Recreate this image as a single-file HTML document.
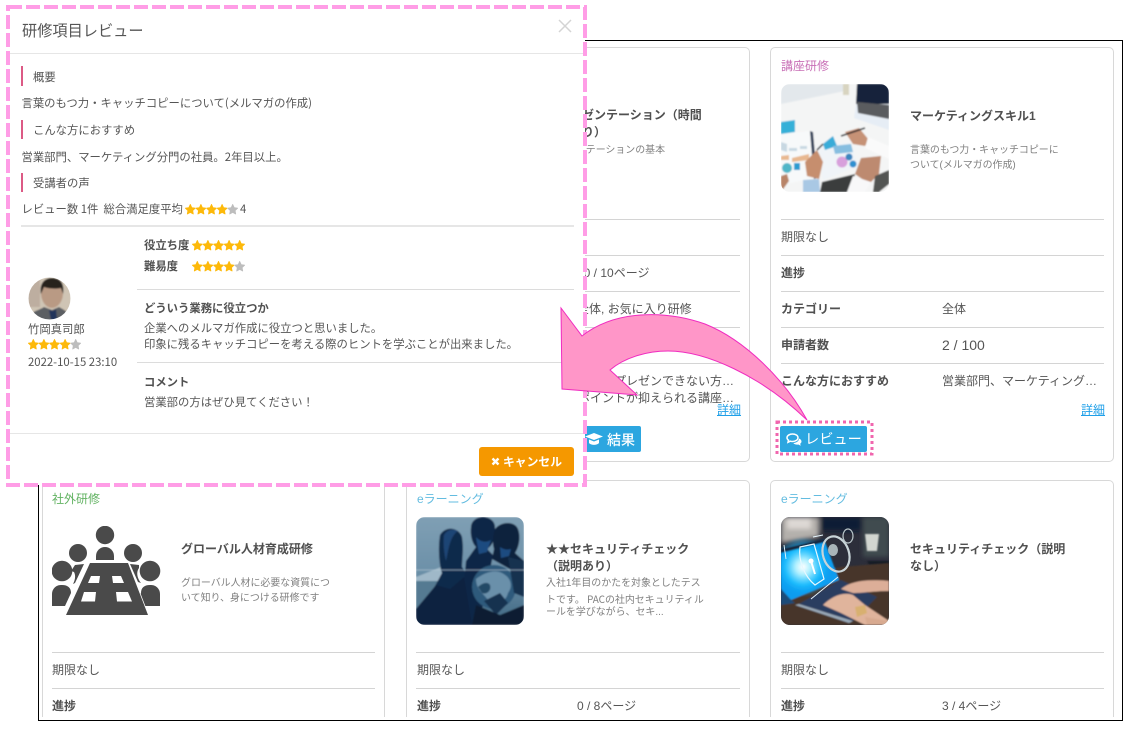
<!DOCTYPE html>
<html lang="ja"><head><meta charset="utf-8"><title>研修項目レビュー</title>
<style>
html,body{margin:0;padding:0;background:#fff;overflow:hidden;height:729px}
#p{position:relative;width:1134px;height:729px;overflow:hidden;background:#fff;font-family:"Liberation Sans","Noto Sans CJK JP",sans-serif;color:#555;font-size:12px}
.t{position:absolute;white-space:nowrap;line-height:16px;transform:translateY(-7px)}
.b{font-weight:700;color:#505050}
.m{font-size:11.35px;font-family:"Noto Sans CJK JP","Liberation Sans",sans-serif;transform:translateY(-8px)}
.d{font-size:9.95px;color:#808080;transform:translateY(-6px)}
.card{position:absolute;box-sizing:border-box;border:1.5px solid #d8d8d8;border-radius:5px;background:#fff}
.hr{position:absolute;height:1px;background:#d4d4d4}
.mh{position:absolute;height:1px;background:#e6e6e6}
.bar{position:absolute;left:21px;width:2px;background:#dc5a85}
.lnk{color:#1e9fe8;text-decoration:underline}
.btn{position:absolute;background:#2ca6e0;border-radius:2px;color:#fff;font-size:14px}
svg{position:absolute;display:block}
</style></head><body><div id="p">
<svg width="0" height="0"><defs>
<polygon id="s" points="5.3,.4 6.8,3.7 10.2,4.200 7.700,6.600 8.300,10 5.300,8.400 2.300,10 2.900,6.600 .4,4.200 3.800,3.700" stroke-width=".8" stroke-linejoin="round"/>
<g id="s4" fill="#fdb90a" stroke="#fdb90a"><use href="#s" x="0"/><use href="#s" x="10.6"/><use href="#s" x="21.2"/><use href="#s" x="31.8"/><use href="#s" x="42.4" style="fill:#bdbdbd;stroke:#bdbdbd"/></g>
<g id="s5" fill="#fdb90a" stroke="#fdb90a"><use href="#s" x="0"/><use href="#s" x="10.6"/><use href="#s" x="21.2"/><use href="#s" x="31.8"/><use href="#s" x="42.4"/></g>
<clipPath id="rc"><rect width="108" height="108" rx="9"/></clipPath>
<filter id="bl" x="-10%" y="-10%" width="120%" height="120%"><feGaussianBlur stdDeviation="0.8"/></filter>
<filter id="bl2" x="-20%" y="-20%" width="140%" height="140%"><feGaussianBlur stdDeviation="2.500"/></filter>
<radialGradient id="glow"><stop offset="0" stop-color="#fff"/><stop offset=".25" stop-color="#b0f0ff"/><stop offset=".6" stop-color="#20c0ff" stop-opacity=".9"/><stop offset="1" stop-color="#0a9cf0" stop-opacity="0"/></radialGradient>
<linearGradient id="g2" x1="0" y1="0" x2="0" y2="1"><stop offset="0" stop-color="#7f9fb4"/><stop offset=".5" stop-color="#6c90a8"/><stop offset="1" stop-color="#3f6782"/></linearGradient>
</defs></svg>

<!-- frame -->
<div style="position:absolute;left:38px;top:40px;width:1083px;height:679px;border:1.5px solid #000"></div>

<!-- row 1 cards -->
<div class="card" style="left:406px;top:47px;width:344px;height:415px"></div>
<div class="card" style="left:770px;top:47px;width:344px;height:415px"></div>

<!-- row 2 cards -->
<div style="position:absolute;left:42px;top:480px;width:1072px;height:237px;overflow:hidden">
<div class="card" style="left:0;top:0;width:343px;height:237px;border-bottom:0;border-radius:5px 5px 0 0"></div>
<div class="card" style="left:364px;top:0;width:344px;height:237px;border-bottom:0;border-radius:5px 5px 0 0"></div>
<div class="card" style="left:728px;top:0;width:344px;height:237px;border-bottom:0;border-radius:5px 5px 0 0"></div>
</div>

<!-- card 2 row 1 content -->
<div class="t b" style="left:558px;top:114px">プレゼンテーション（時間</div>
<div class="t b" style="left:546px;top:131px">制限あり）</div>
<div class="t d" style="left:546px;top:149px">プレゼンテーションの基本</div>
<div class="hr" style="left:416px;top:219px;width:324px"></div>
<div class="hr" style="left:416px;top:255px;width:324px"></div>
<div class="hr" style="left:416px;top:291px;width:324px"></div>
<div class="hr" style="left:416px;top:327px;width:324px"></div>
<div class="hr" style="left:416px;top:363px;width:324px"></div>
<div class="t" style="left:577px;top:272px">10 / 10ページ</div>
<div class="t" style="left:577px;top:308px">全体, お気に入り研修</div>
<div class="t" style="left:578px;top:380px">うまくプレゼンできない方…</div>
<div class="t" style="left:578px;top:397px">ポイントが抑えられる講座…</div>
<div class="t lnk" style="left:717px;top:409px">詳細</div>
<div class="btn" style="left:570px;top:426px;width:71px;height:26px">
<svg style="left:15px;top:7px" width="18" height="13" viewBox="0 0 18 13"><path fill="#fff" d="M9 0 18 3.500 9 7 0 3.500ZM4 6.500 9 8.500 14 6.500V10C12 12.500 6 12.500 4 10Z"/></svg>
<span class="t" style="left:37px;top:13px;font-weight:500">結果</span></div>

<!-- card 3 row 1 content -->
<div class="t" style="left:781px;top:65px;color:#c86fb6">講座研修</div>
<svg style="left:781px;top:84px" width="108" height="108" viewBox="0 0 108 108"><g clip-path="url(#rc)"><g filter="url(#bl)">
<rect width="108" height="108" fill="#f4f5f5"/>
<path d="M0 0H64V7L0 20Z" fill="#e3e8ec"/>
<path d="M62 0h6v11h-6Z" fill="#d8d4c0"/>
<path d="M78 0 73 34 108 46V0Z" fill="#e6edf5"/>
<path d="M76 0h32v20H75Z" fill="#14203a"/>
<path d="M76 18 108 21V35L77 29Z" fill="#5a5c5e"/>
<path d="M0 50 29 47 34 94 0 101Z" fill="#f7f9fa"/>
<path d="M29 47 32 48 36 94 33 95Z" fill="#2e3d56"/>
<path d="M0 38 14 36V48L0 50Z" fill="#35b0d8"/>
<path d="M0 66 6 68V60L0 58ZM8 64h8v3H8ZM19 62h7v3h-7Z" fill="#c8d8e2"/>
<path d="M0 72 8 71V76H0ZM11 74 28 70V76L11 78Z" fill="#e8b890"/>
<circle cx="6" cy="84" r="5" fill="#4fb6c8"/><rect x="13" y="79" width="6" height="7" fill="#2a9cd0"/>
<path d="M36 62 68 58 78 82 42 96Z" fill="#f0f4f8"/>
<path d="M42 60 52 52 56 62 44 66Z" fill="#38acd8"/>
<path d="M52 62 70 60 72 68 54 70Z" fill="#86bee0"/>
<circle cx="61" cy="78" r="5.500" fill="#d8a0dc"/><circle cx="68" cy="73" r="3.500" fill="#3a86c0"/><circle cx="72" cy="80" r="3.500" fill="#2e90d0"/>
<path d="M0 108V92L6 90 8 97 0 108Z" fill="#b88468"/>
<path d="M26 92 24 78 36 66 42 78 38 95Z" fill="#c68e6e"/>
<path d="M22 96 38 95 39 108H22Z" fill="#a9c8e4"/>
<path d="M39 108 41 98 74 90 70 108Z" fill="#3a3c3e"/>
<path d="M64 48 78 44 88 56 84 62 72 60Z" fill="#c69276"/>
<path d="M60 52 84 44" stroke="#22262c" stroke-width="1.500"/>
<path d="M36 66 42 60" stroke="#22262c" stroke-width="1.500"/>
<path d="M87 53 108 62V75L84 64Z" fill="#fafafa"/>
<path d="M74 90 80 74 100 72 98 90 88 100Z" fill="#bd8a70"/>
<path d="M66 108 72 92 90 98 84 108Z" fill="#f8f8f9"/>
<path d="M92 108 94 92 108 86V100L98 108Z" fill="#525452"/>
</g></g></svg>
<div class="t b" style="left:910px;top:115px">マーケティングスキル1</div>
<div class="t d" style="left:910px;top:149px">言葉のもつ力・キャッチコピーに</div>
<div class="t d" style="left:910px;top:164px">ついて(メルマガの作成)</div>
<div class="hr" style="left:781px;top:219px;width:323px"></div>
<div class="hr" style="left:781px;top:255px;width:323px"></div>
<div class="hr" style="left:781px;top:291px;width:323px"></div>
<div class="hr" style="left:781px;top:327px;width:323px"></div>
<div class="hr" style="left:781px;top:363px;width:323px"></div>
<div class="t" style="left:781px;top:236px">期限なし</div>
<div class="t b" style="left:781px;top:272px">進捗</div>
<div class="t b" style="left:781px;top:308px">カテゴリー</div>
<div class="t" style="left:942px;top:308px">全体</div>
<div class="t b" style="left:781px;top:344px">申請者数</div>
<div class="t" style="left:942px;top:344px;font-size:14px">2 / 100</div>
<div class="t b" style="left:781px;top:380px">こんな方におすすめ</div>
<div class="t" style="left:942px;top:380px">営業部門、マーケティング…</div>
<div class="t lnk" style="left:1081px;top:409px">詳細</div>
<div class="btn" style="left:780px;top:426px;width:87px;height:26px">
<svg style="left:6px;top:7px" width="16" height="13" viewBox="0 0 16 13"><path fill="none" stroke="#fff" stroke-width="1.500" d="M6.500 1C3.500 1 1 2.600 1 4.700c0 1 .6 1.800 1.500 2.500L2 9.300l2.300-1.100c.7.200 1.400.3 2.200.3 3 0 5.500-1.600 5.500-3.800S9.500 1 6.500 1Z"/><path fill="#fff" d="M13 5.500c1.300.6 2.500 1.500 2.500 3 0 1-.6 1.700-1.300 2.200l.5 2-2.400-1.200c-2 .3-4 -.2-5-1.500 3 0 5.700-1.800 5.700-4.500Z"/></svg>
<span class="t" style="left:25px;top:13px;font-size:14.200px">レビュー</span></div>
<svg style="left:775px;top:420px" width="99" height="36"><rect x="2" y="2" width="95" height="32" fill="none" stroke="#f066ae" stroke-width="3" stroke-dasharray="3 3"/></svg>

<!-- row 2 content -->
<div class="t" style="left:52px;top:498px;color:#63b363">社外研修</div>
<svg style="left:52px;top:526px" width="109" height="90" viewBox="52 526 109 90" fill="#4a4a4a">
<circle cx="105" cy="535" r="9.200"/><path d="M96 560v-4a9 9 0 0 1 18 0v4Z"/>
<circle cx="78" cy="553" r="9"/><circle cx="133" cy="553" r="9"/>
<circle cx="62" cy="571" r="10.300"/><circle cx="150" cy="571" r="10.300"/>
<path d="M52 606v-12a9 9 0 0 1 10-9c6 0 9 3 9 8l-6 13ZM160 606v-12a9 9 0 0 0-10-9c-6 0-9 3-9 8l-6 13Z" transform="translate(0 0)"/>
<path d="M75 565l9-1-9 19-2 1c2-4 3-8 1-12l-3-1ZM130 564l9 1 0 3c-3 4-2 10 2 15l-3-1Z"/>
<path d="M90 563h38l20 52H66Z" stroke="#fff" stroke-width="1.500" paint-order="stroke"/>
<path fill="#fff" d="M91 576h9l-1 7H88ZM112 576h9l3 7h-11ZM84 592h12l-1 9.500H81ZM116 592h12l4 9.500h-15Z"/>
</svg>
<div class="t b" style="left:181px;top:548px">グローバル人材育成研修</div>
<div class="t d" style="left:181px;top:582px">グローバル人材に必要な資質につ</div>
<div class="t d" style="left:181px;top:597px">いて知り、身につける研修です</div>
<div class="hr" style="left:52px;top:652px;width:323px"></div>
<div class="hr" style="left:52px;top:688px;width:323px"></div>
<div class="t" style="left:52px;top:669px">期限なし</div>
<div class="t b" style="left:52px;top:705px">進捗</div>

<div class="t" style="left:417px;top:498px;color:#63bce0">eラーニング</div>
<svg style="left:416px;top:517px" width="108" height="108" viewBox="0 0 108 108"><g clip-path="url(#rc)"><g filter="url(#bl)">
<rect width="108" height="108" fill="url(#g2)"/>
<path d="M0 60 30 48 40 56 0 74Z" fill="#9fb8c8"/>
<path d="M0 64H28L22 90 0 96Z" fill="#557a92"/>
<path d="M24 18a12 12 0 0 1 22 2c2 12 0 22 0 30l8 12-4 46H8l4-26 14-26c-3-8-4-26-2-38Z" fill="#11294c"/>
<path d="M28 18a10 10 0 0 1 14-4c-5 3-8 10-10 20l-2 10c-2-8-3-18-2-26Z" fill="#1d4474"/>
<path d="M55 10a12 10 0 0 1 24 0c0 12-2 18-8 22l6 6-14 70H44l6-64 10-14C56 26 54 18 55 10Z" fill="#0e2646"/>
<path d="M60 20c4 5 10 6 15 3l-4 12-8 2Z" fill="#1f4c80"/>
<path d="M79 12c6-8 20-8 23 0 3 8 1 18-3 24l9 8v16l-32-18 2-10C76 26 77 18 79 12Z" fill="#0b203e"/>
<path d="M84 30c4 3 8 3 11 2l-2 7-8 2Z" fill="#1f4c80"/>
<circle cx="78" cy="70" r="22" fill="#2f5a7c"/>
<path d="M60 62c8-6 18-10 26-6 8 4 12 12 6 20-2 8-10 14-18 10-4-8-14-12-14-24Z" fill="#6a90aa"/>
<path d="M68 84l16-8 8 10-12 12Z" fill="#15304f"/>
<path d="M62 70c4-4 10-6 12-2 2 6-4 10-8 8Z" fill="#234966"/>
<path d="M0 108V92L20 68 34 72 48 60 56 108Z" fill="#0b2040"/>
<path d="M56 108 60 88 84 98 108 88V108Z" fill="#091a32"/>
<path d="M92 40 108 44V80L98 76Z" fill="#14304f"/>
<path d="M0 53H108" stroke="#b9ccd8" stroke-width=".8" opacity=".8"/>
</g></g></svg>
<div class="t b" style="left:546px;top:548px">★★セキュリティチェック</div>
<div class="t b" style="left:546px;top:565px">（説明あり）</div>
<div class="t d" style="left:546px;top:582px">入社1年目のかたを対象としたテス</div>
<div class="t d" style="left:546px;top:597px;font-family:'Noto Sans CJK JP',sans-serif">トです。 PACの社内セキュリティル</div>
<div class="t d" style="left:546px;top:611px">ールを学びながら、セキ...</div>
<div class="hr" style="left:416px;top:652px;width:324px"></div>
<div class="hr" style="left:416px;top:688px;width:324px"></div>
<div class="t" style="left:417px;top:669px">期限なし</div>
<div class="t b" style="left:417px;top:705px">進捗</div>
<div class="t" style="left:577px;top:705px">0 / 8ページ</div>

<div class="t" style="left:781px;top:498px;color:#63bce0">eラーニング</div>
<svg style="left:781px;top:517px" width="108" height="108" viewBox="0 0 108 108"><g clip-path="url(#rc)">
<rect width="108" height="108" fill="#2c2e3a"/>
<g filter="url(#bl2)"><path d="M0 0H38V20L0 26Z" fill="#b4b0ac"/><path d="M6 0H30V12H6Z" fill="#ddd8d4"/>
<rect x="82" y="0" width="26" height="40" fill="#3f4c50"/>
<rect x="40" y="0" width="40" height="14" fill="#0e1c36"/></g>
<path d="M84 17H98L96 34H86Z" fill="#d2d6d0" filter="url(#bl)"/>
<path d="M86 44H108V50L88 48Z" fill="#181c28" filter="url(#bl)"/>
<g filter="url(#bl)">
<path d="M0 60 60 50 108 46V108H0Z" fill="#463629"/>
<path d="M0 32 43 22 58 63 10 83 0 72Z" fill="#0a9cf0"/>
<circle cx="22" cy="50" r="30" fill="url(#glow)"/>
<path d="M0 32 43 22 44 25 0 36Z" fill="#14263e"/>
<path d="M0 72 10 83 14 86 0 88Z" fill="#1a4c78"/>
<path d="M18 87 60 63 96 80 72 104Z" fill="#2c3c60"/>
<path d="M14 88 18 87 72 104 68 106Z" fill="#98a8b8"/>
<path d="M60 72C70 64 85 62 108 64V74C92 74 84 76 72 76Z" fill="#dcae98"/>
<path d="M42 88C50 80 62 74 72 78L84 88 108 104V108H84L60 96Z" fill="#e0b49c"/>
<path d="M74 90 84 88 86 96 76 100Z" fill="#d8b070"/>
<path d="M84 100 108 104V108H86Z" fill="#d8aa90"/>
</g>
<path d="M19 30 33 27 43 62 34 68C24 60 17 44 19 30Z" fill="none" stroke="#e6f8ff" stroke-width="1.200"/>
<circle cx="30" cy="44" r="2.500" fill="#fff"/><path d="M30 44 34 57" stroke="#fff" stroke-width="2"/>
<path d="M3 28 5 42M32 20 42 18M57 60 30 82" fill="none" stroke="#e8f8ff" stroke-width=".9"/>
<ellipse cx="55" cy="37" rx="13" ry="18" fill="none" stroke="#c8d4d8" stroke-width="2.200" transform="rotate(-18 55 37)"/>
<ellipse cx="52" cy="33" rx="5" ry="6" fill="#a8b4b8"/>
<ellipse cx="67" cy="19" rx="5" ry="7" fill="none" stroke="#b8c4c8" stroke-width="1.200"/>
</g></svg>
<div class="t b" style="left:910px;top:548px">セキュリティチェック（説明</div>
<div class="t b" style="left:910px;top:565px">なし）</div>
<div class="hr" style="left:781px;top:652px;width:323px"></div>
<div class="hr" style="left:781px;top:688px;width:323px"></div>
<div class="t" style="left:781px;top:669px">期限なし</div>
<div class="t b" style="left:781px;top:705px">進捗</div>
<div class="t" style="left:942px;top:705px">3 / 4ページ</div>

<!-- modal -->
<div style="position:absolute;left:8px;top:7px;width:577px;height:478px;background:#fff"></div>
<svg style="left:0;top:0" width="600" height="495"><rect x="8" y="7" width="577" height="478" fill="none" stroke="#ff9de6" stroke-width="4" stroke-dasharray="14 4"/></svg>
<div class="t m" style="left:22px;top:30px;font-size:15.200px">研修項目レビュー</div>
<svg style="left:558px;top:19px" width="14" height="14"><path d="M1 1 13 13M13 1 1 13" stroke="#d4d4d4" stroke-width="1.500"/></svg>
<div class="mh" style="left:10px;top:53px;width:573px"></div>
<div class="bar" style="top:66px;height:20px"></div>
<div class="t m" style="left:33px;top:77px">概要</div>
<div class="t m" style="left:21.500px;top:103px">言葉のもつ力・キャッチコピーについて(メルマガの作成)</div>
<div class="bar" style="top:120px;height:19px"></div>
<div class="t m" style="left:33px;top:130px">こんな方におすすめ</div>
<div class="t m" style="left:21.500px;top:157px">営業部門、マーケティング分門の社員。2年目以上。</div>
<div class="bar" style="top:173px;height:19px"></div>
<div class="t m" style="left:33px;top:183px">受講者の声</div>
<div class="t m" style="left:21.500px;top:209px">レビュー数 1件 &nbsp;総合満足度平均</div>
<svg style="left:185px;top:204px" width="54" height="11"><use href="#s4"/></svg>
<div class="t m" style="left:240px;top:209px">4</div>
<div class="mh" style="left:21px;top:225px;width:553px;height:2px"></div>

<svg style="left:28px;top:277px" width="43" height="43" viewBox="0 0 43 43"><defs><clipPath id="av"><circle cx="21.500" cy="21.500" r="21"/></clipPath></defs><g clip-path="url(#av)"><g filter="url(#bl)">
<rect width="43" height="43" fill="#cfc4b4"/>
<path d="M0 0h12v30H0Z" fill="#bdaea0"/>
<path d="M0 43c2-9 10-9 16-13l8 3 7-3c5 3 11 5 12 13Z" fill="#5c5e64"/>
<path d="M21 33l4 1 3-2 1 11h-6Z" fill="#24365c"/>
<path d="M13 16c0-7 4-11 11-11s11 4 11 11c0 8-5 15-11 15s-11-7-11-15Z" fill="#b99a84"/>
<path d="M13 17C11 6 17 1 24 1s13 4 11 16l-2-6c-4 1-12 1-17-1Z" fill="#25201e"/>
</g></g></svg>
<div class="t m" style="left:28px;top:329px">竹岡真司郎</div>
<svg style="left:28px;top:339px" width="54" height="11"><use href="#s4"/></svg>
<div class="t m" style="left:28px;top:362px">2022-10-15 23:10</div>

<div class="t m b" style="left:144px;top:245px">役立ち度</div>
<svg style="left:192px;top:240px" width="54" height="11"><use href="#s5"/></svg>
<div class="t m b" style="left:144px;top:266px">難易度</div>
<svg style="left:192px;top:261px" width="54" height="11"><use href="#s4"/></svg>
<div class="mh" style="left:137px;top:289px;width:437px;background:#dcdcdc"></div>
<div class="t m b" style="left:144px;top:308px">どういう業務に役立つか</div>
<div class="t m" style="left:144px;top:328px">企業へのメルマガ作成に役立つと思いました。</div>
<div class="t m" style="left:144px;top:344px">印象に残るキャッチコピーを考える際のヒントを学ぶことが出来ました。</div>
<div class="mh" style="left:137px;top:362px;width:437px;background:#dcdcdc"></div>
<div class="t m b" style="left:144px;top:382px">コメント</div>
<div class="t m" style="left:144px;top:402px">営業部の方はぜひ見てください！</div>
<div class="mh" style="left:10px;top:433px;width:573px"></div>
<div style="position:absolute;left:479px;top:447px;width:95px;height:29px;background:#f59800;border-radius:3px"></div>
<svg style="left:491px;top:457px" width="9" height="9"><path d="M1.500 1.500 7.500 7.500M7.500 1.500 1.500 7.500" stroke="#fff" stroke-width="2.400"/></svg>
<div class="t" style="left:503px;top:461px;color:#fff;font-weight:700;font-size:11.800px">キャンセル</div>

<!-- arrow -->
<svg style="left:0;top:0" width="1134" height="729"><path d="M807 420C785 380 745 340 705 324C665 310 615 310 582 336L561 308L562 389L637 395L610 370C625 357 648 351 668 351C705 351 760 375 807 420Z" fill="#ff96c8" stroke="#f02cc0" stroke-width="1"/></svg>
</div></body></html>
